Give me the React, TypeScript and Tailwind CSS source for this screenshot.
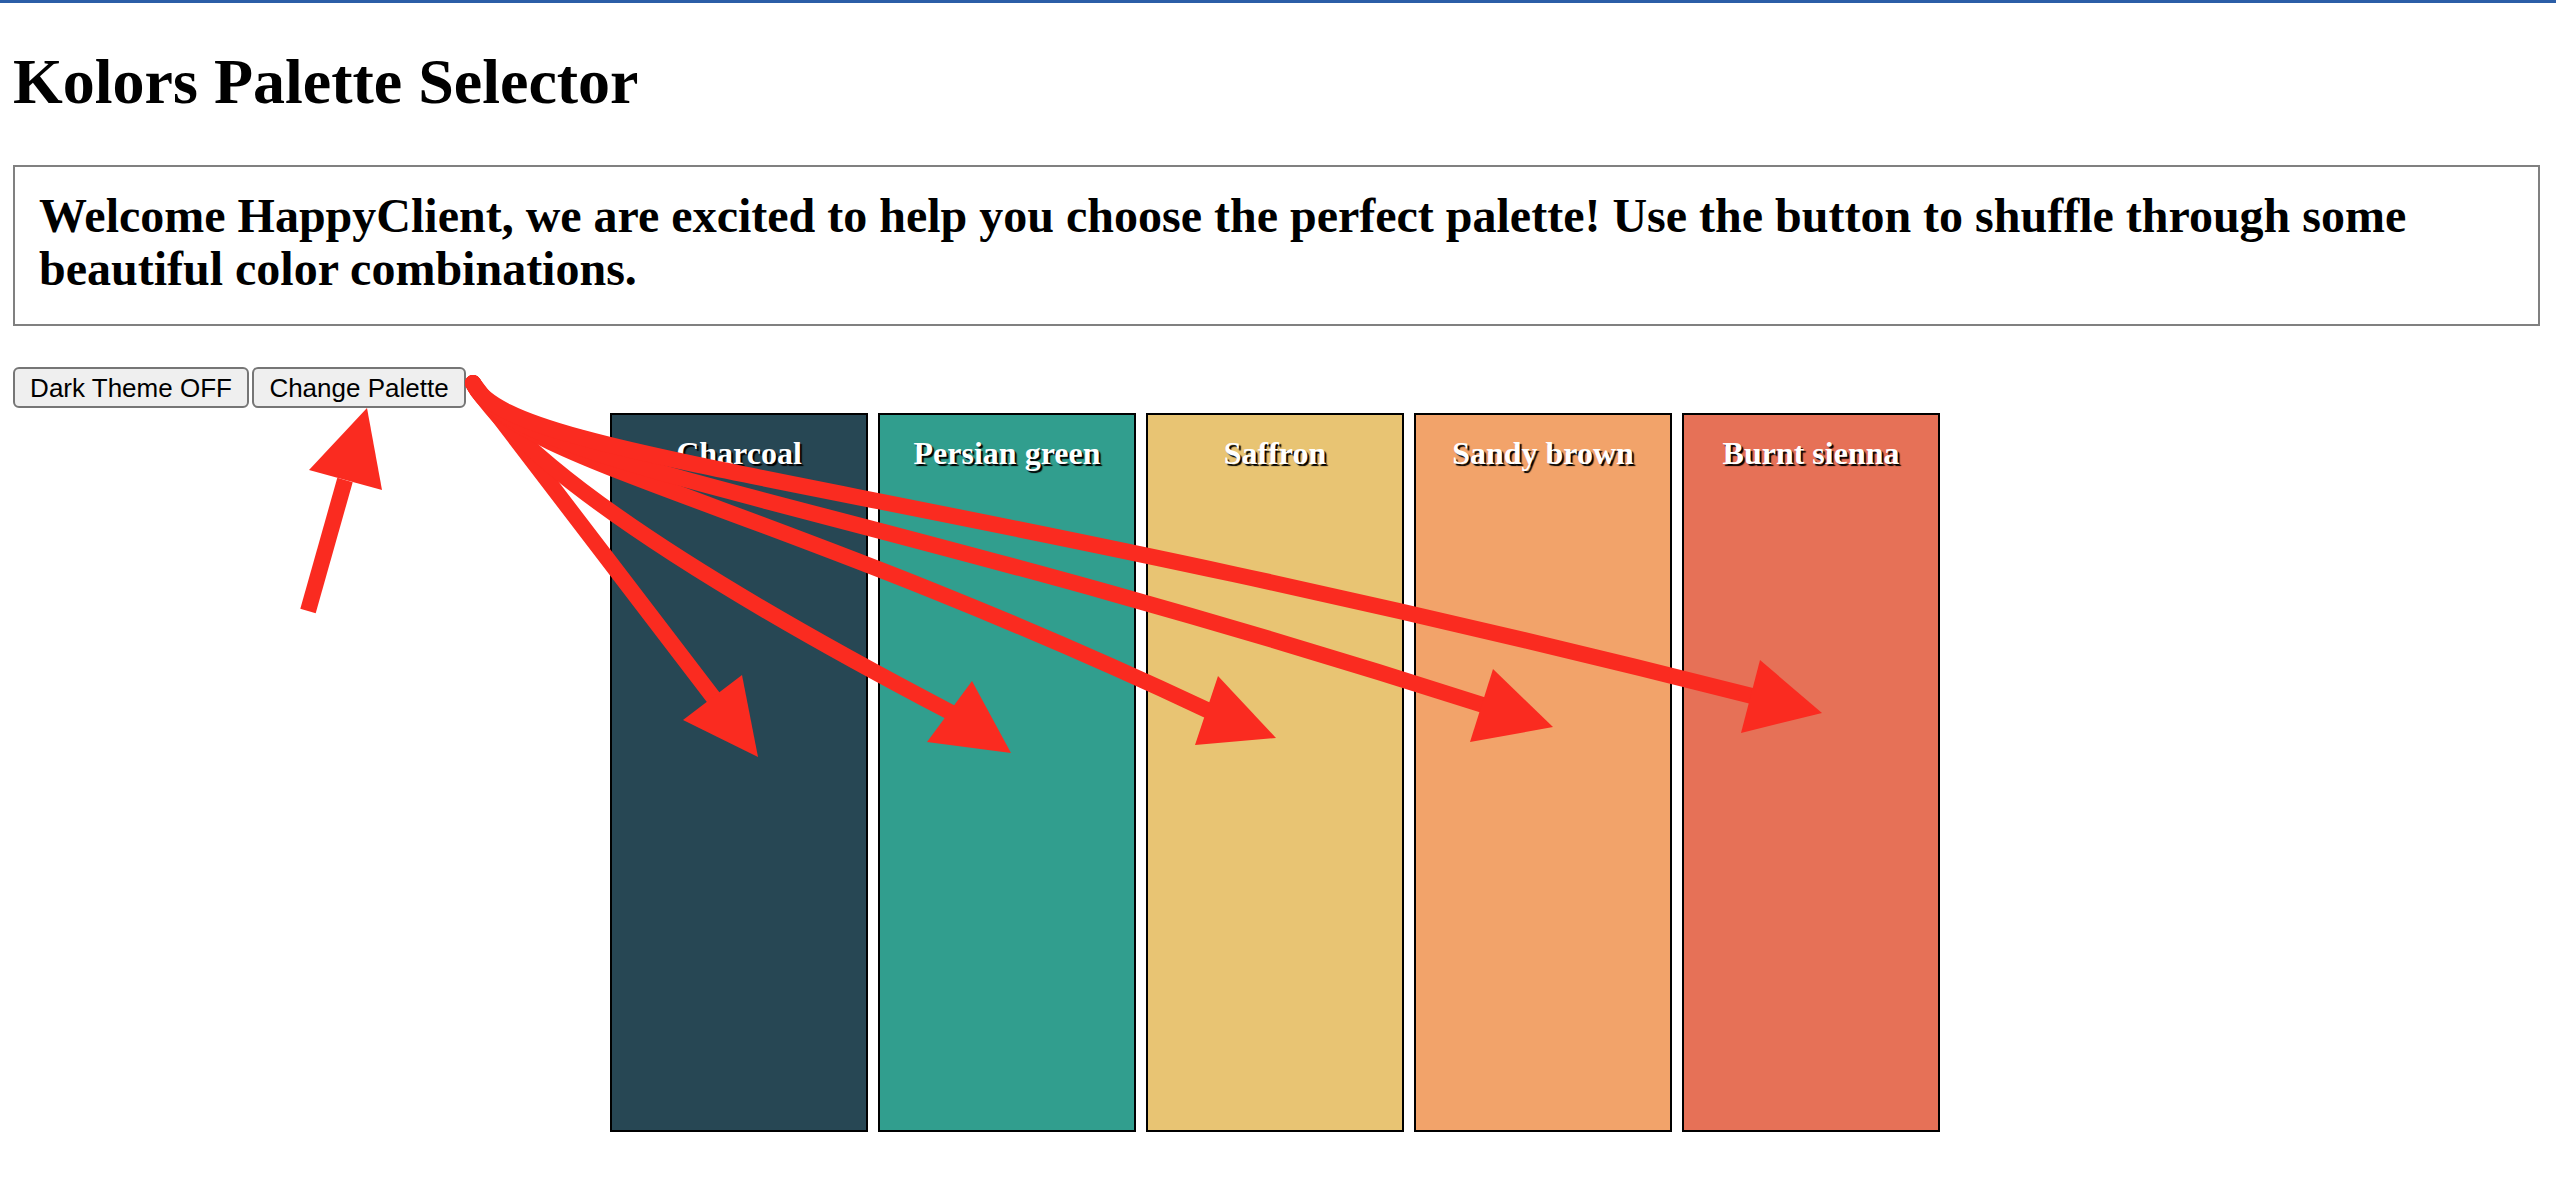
import React from 'react'

const palette = [
  { name: 'Charcoal', color: 'bg-[#274754]' },
  { name: 'Persian green', color: 'bg-[#319e8e]' },
  { name: 'Saffron', color: 'bg-[#e8c473]' },
  { name: 'Sandy brown', color: 'bg-[#f2a36a]' },
  { name: 'Burnt sienna', color: 'bg-[#e67157]' },
]

// annotation arrows drawn over the page
const fan = [
  { d: 'M473 383 L713 697', head: '758,757 683,720 742,675' },
  { d: 'M473 383 Q545 500 950 712', head: '1011,753 927,742 972,681' },
  { d: 'M473 383 C510 460, 760 500, 1207 710', head: '1276,738 1195,745 1218,676' },
  { d: 'M473 383 C510 465, 830 495, 1483 705', head: '1553,727 1470,742 1493,669' },
  { d: 'M473 383 C510 460, 880 475, 1752 696', head: '1822,713 1741,733 1760,660' },
]

function Arrows() {
  return (
    <svg className="absolute inset-0 pointer-events-none" width="2556" height="1192" viewBox="0 0 2556 1192">
      <g fill="none" stroke="#fa2b20" strokeWidth="16" strokeLinecap="round">
        {fan.map((a) => (
          <path key={a.head} d={a.d} />
        ))}
        <path d="M308 611 L345 480" strokeLinecap="butt" />
      </g>
      <g fill="#fa2b20">
        {fan.map((a) => (
          <polygon key={a.head} points={a.head} />
        ))}
        <polygon points="367,408 309,470 382,490" />
      </g>
    </svg>
  )
}

export default function App() {
  return (
    <div className="relative min-h-screen bg-white text-black font-['Liberation_Serif','Times_New_Roman',serif]">
      <div className="h-[3px] bg-[#2b5ea7]" />
      <div className="px-[13px]">
        <h1 className="mt-[43px] text-[64px] leading-[71px] font-bold">Kolors Palette Selector</h1>

        <div className="mt-[48px] mr-[3px] border-2 border-[#808080] pl-[24px] pr-[24px] pt-[22px] pb-[29px]">
          <h2 className="text-[48px] leading-[53px] font-bold">
            Welcome HappyClient, we are excited to help you choose the perfect palette! Use the button to shuffle
            through some beautiful color combinations.
          </h2>
        </div>

        <div className="mt-[41px] flex gap-[3px] font-['Liberation_Sans',Arial,sans-serif] text-[26px]">
          <button className="h-[41px] w-[236px] rounded-[6px] border-2 border-[#767676] bg-[#efefef] leading-none">
            Dark Theme OFF
          </button>
          <button className="h-[41px] w-[214px] rounded-[6px] border-2 border-[#767676] bg-[#efefef] leading-none">
            Change Palette
          </button>
        </div>

        <div className="mt-[5px] flex justify-center gap-[10px] pr-[6px]">
          {palette.map((p) => (
            <div key={p.name} className={`h-[719px] w-[258px] border-2 border-black ${p.color} pt-[14px]`}>
              <h3 className="text-center text-[32px] font-bold text-white [text-shadow:2px_2px_1px_#000]">
                {p.name}
              </h3>
            </div>
          ))}
        </div>
      </div>
      <Arrows />
    </div>
  )
}
